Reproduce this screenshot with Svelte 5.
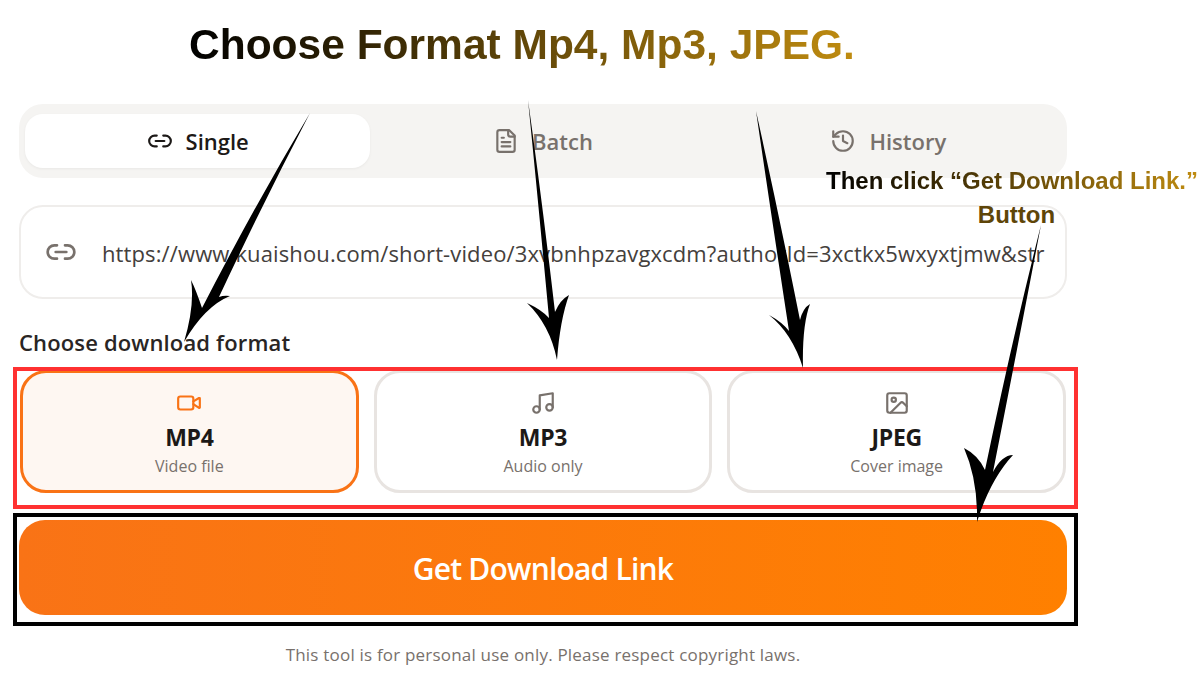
<script>
  const formats = [
    { id: 'mp4', name: 'MP4', note: 'Video file' },
    { id: 'mp3', name: 'MP3', note: 'Audio only' },
    { id: 'jpeg', name: 'JPEG', note: 'Cover image' }
  ];
  let selected = $state('mp4');
  let tab = $state('single');
</script>

<div class="page">
  <h1 class="headline"><span>Choose Format Mp4, Mp3, JPEG.</span></h1>

  <div class="tool">
    <div class="tabs">
      <button class="tab" class:active={tab === 'single'} onclick={() => (tab = 'single')}>
        <svg viewBox="0 0 24 24"><path d="M9 17H7A5 5 0 0 1 7 7h2" /><path d="M15 7h2a5 5 0 1 1 0 10h-2" /><line x1="8" y1="12" x2="16" y2="12" /></svg>
        Single
      </button>
      <button class="tab" class:active={tab === 'batch'} onclick={() => (tab = 'batch')}>
        <svg viewBox="0 0 24 24"><path d="M15 2H6a2 2 0 0 0-2 2v16a2 2 0 0 0 2 2h12a2 2 0 0 0 2-2V7Z" /><path d="M14 2v4a2 2 0 0 0 2 2h4" /><path d="M10 9H8" /><path d="M16 13H8" /><path d="M16 17H8" /></svg>
        Batch
      </button>
      <button class="tab" class:active={tab === 'history'} onclick={() => (tab = 'history')}>
        <svg viewBox="0 0 24 24"><path d="M3 12a9 9 0 1 0 9-9 9.75 9.75 0 0 0-6.74 2.74L3 8" /><path d="M3 3v5h5" /><path d="M12 7v5l4 2" /></svg>
        History
      </button>
    </div>

    <div class="url">
      <svg viewBox="0 0 24 24"><path d="M9 17H7A5 5 0 0 1 7 7h2" /><path d="M15 7h2a5 5 0 1 1 0 10h-2" /><line x1="8" y1="12" x2="16" y2="12" /></svg>
      <span class="url-text">https://www.kuaishou.com/short-video/3xvbnhpzavgxcdm?authorId=3xctkx5wxyxtjmw&amp;str</span>
    </div>

    <div class="label">Choose download format</div>

    <div class="cards">
      {#each formats as f}
        <button class="card" class:active={selected === f.id} onclick={() => (selected = f.id)}>
          {#if f.id === 'mp4'}
            <svg viewBox="0 0 24 24"><path d="m16 13 5.223 3.482a.5.5 0 0 0 .777-.416V7.87a.5.5 0 0 0-.752-.432L16 10.5" /><rect x="2" y="6" width="14" height="12" rx="2" /></svg>
          {:else if f.id === 'mp3'}
            <svg viewBox="0 0 24 24"><path d="M9 18V5l12-2v13" /><circle cx="6" cy="18" r="3" /><circle cx="18" cy="16" r="3" /></svg>
          {:else}
            <svg viewBox="0 0 24 24"><rect x="3" y="3" width="18" height="18" rx="2" /><circle cx="9" cy="9" r="2" /><path d="m21 15-3.086-3.086a2 2 0 0 0-2.828 0L6 21" /></svg>
          {/if}
          <span class="card-name">{f.name}</span>
          <span class="card-note">{f.note}</span>
        </button>
      {/each}
    </div>

    <button class="submit">Get Download Link</button>
    <p class="footnote">This tool is for personal use only. Please respect copyright laws.</p>
  </div>

  <!-- annotations drawn on top of the screenshot -->
  <div class="mark red"></div>
  <div class="mark black"></div>
  <div class="callout">
    <span class="callout-line">Then click “Get Download Link.”</span>
    <span class="callout-btn">Button</span>
  </div>
  <svg class="arrows" viewBox="0 0 1200 675">
    <path d="M310 113 Q262 205 219 297 Q224 295 230 296 Q205 306 184 342 Q195 305 191 280 Q196 290 202 308 Q255 205 310 113Z" />
    <path d="M528 100 Q538 200 549 318 Q542 310 527 303 Q550 325 557 360 Q560 320 569 295 Q560 300 555 312 Q542 200 528 100Z" />
    <path d="M756 111 Q772 220 789 331 Q782 322 769 315 Q792 333 803 368 Q802 325 810 304 Q803 308 800 320 Q778 210 756 111Z" />
    <path d="M1041 225 Q1012 340 985 470 Q978 455 964 448 Q978 480 977 522 Q990 480 1013 455 Q1002 455 993 472 Q1018 345 1041 225Z" />
  </svg>
</div>

<style>
  :global(body) {
    margin: 0;
    background: #fff;
  }

  .page {
    position: relative;
    width: 1200px;
    height: 675px;
    overflow: hidden;
    background: #fff;
    font-family: "Open Sans", "Noto Sans", sans-serif;
    color: #1c1917;
  }

  .headline {
    margin: 0;
    height: 104px;
    padding: 20px 0 0 189px;
    box-sizing: border-box;
    font-family: "Liberation Sans", Arial, sans-serif;
    font-size: 42.5px;
    line-height: 50px;
    font-weight: 700;
  }

  .headline span {
    background: linear-gradient(90deg, #000 0%, #c08c10 100%);
    -webkit-background-clip: text;
    background-clip: text;
    color: transparent;
  }

  .tool {
    width: 1048px;
    margin-left: 19px;
  }

  svg {
    fill: none;
    stroke: currentColor;
    stroke-width: 2;
    stroke-linecap: round;
    stroke-linejoin: round;
  }

  button {
    font-family: inherit;
    border: none;
    cursor: pointer;
  }

  .tabs {
    display: grid;
    grid-template-columns: repeat(3, 1fr);
    height: 74px;
    padding: 10px 6px;
    box-sizing: border-box;
    border-radius: 24px;
    background: #f5f4f2;
  }

  .tab {
    display: flex;
    align-items: center;
    justify-content: center;
    gap: 13px;
    border-radius: 18px;
    background: transparent;
    color: #78716c;
    font-size: 22px;
    font-weight: 600;
    letter-spacing: 0;
  }

  .tab svg {
    width: 26px;
    height: 26px;
  }

  .tab.active {
    background: #fff;
    color: #1c1917;
    box-shadow: 0 1px 3px rgba(0, 0, 0, 0.05);
  }

  .url {
    display: flex;
    align-items: center;
    gap: 25px;
    height: 94px;
    margin-top: 27px;
    padding: 0 12px 0 24px;
    box-sizing: border-box;
    border: 2px solid #efedeb;
    border-radius: 24px;
    color: #78716c;
  }

  .url svg {
    flex: none;
    width: 32px;
    height: 32px;
  }

  .url-text {
    padding-top: 2px;
    font-size: 22px;
    color: #44403c;
    white-space: nowrap;
    letter-spacing: 0.12px;
  }

  .label {
    margin-top: 28px;
    font-size: 22px;
    line-height: 30px;
    font-weight: 600;
    letter-spacing: 0.15px;
    color: #292524;
  }

  .cards {
    display: grid;
    grid-template-columns: repeat(3, 1fr);
    gap: 15px;
    margin-top: 13px;
    padding-left: 1px;
    padding-right: 1px;
  }

  .card {
    display: flex;
    flex-direction: column;
    align-items: center;
    height: 123px;
    padding: 17px 0 0;
    box-sizing: border-box;
    border: 3px solid #e8e4e1;
    border-radius: 26px;
    background: #fff;
    color: #78716c;
  }

  .card svg {
    width: 26px;
    height: 26px;
  }

  .card.active {
    border-color: #f97316;
    background: #fef7f2;
    color: #f97316;
  }

  .card-name {
    margin-top: 6px;
    font-size: 23px;
    line-height: 30px;
    font-weight: 700;
    letter-spacing: -0.3px;
    color: #1c1917;
  }

  .card-note {
    margin-top: 4px;
    font-size: 16px;
    line-height: 20px;
    color: #78716c;
  }

  .submit {
    display: block;
    width: 100%;
    height: 95px;
    margin-top: 27px;
    padding-top: 3px;
    border-radius: 26px;
    background: linear-gradient(90deg, #f97316 0%, #ff8000 100%);
    color: #fff;
    font-size: 30px;
    font-weight: 600;
    letter-spacing: -0.8px;
  }

  .footnote {
    margin: 29px 0 0;
    text-align: center;
    font-size: 17px;
    line-height: 22px;
    letter-spacing: 0.2px;
    color: #78716c;
  }

  .mark {
    position: absolute;
    left: 13px;
    width: 1065px;
    box-sizing: border-box;
    pointer-events: none;
  }

  .mark.red {
    top: 367px;
    height: 142px;
    border: 4px solid #ff3131;
  }

  .mark.black {
    top: 513px;
    height: 113px;
    border: 4px solid #000;
  }

  .callout {
    position: absolute;
    left: 826px;
    top: 164px;
    width: 372px;
    display: flex;
    flex-direction: column;
    align-items: center;
    font-family: "Liberation Sans", Arial, sans-serif;
    font-size: 24px;
    font-weight: 700;
    line-height: 34px;
  }

  .callout-line {
    white-space: nowrap;
    background: linear-gradient(90deg, #000 0%, #c08c10 100%);
    -webkit-background-clip: text;
    background-clip: text;
    color: transparent;
  }

  .callout-btn {
    margin-left: 9px;
    color: #5e4508;
  }

  .arrows {
    position: absolute;
    inset: 0;
    width: 1200px;
    height: 675px;
    pointer-events: none;
    fill: #000;
    stroke: none;
  }
</style>
